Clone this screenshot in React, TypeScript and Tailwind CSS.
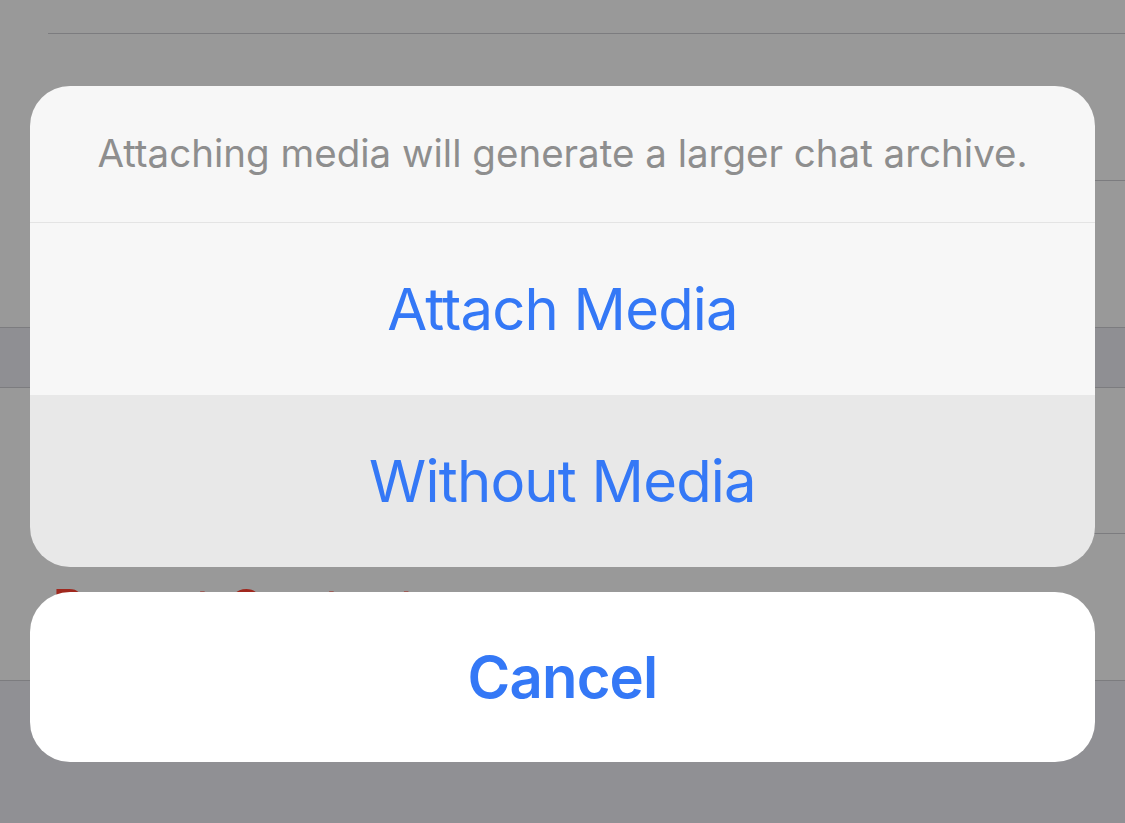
import React from 'react';

const font = { fontFamily: 'Inter, "Noto Sans", sans-serif' };

function ListRow({ text, tone, inset = true, h }: { text?: string; tone?: string; inset?: boolean; h: string }) {
  return (
    <div className={`${h} bg-[#999999] ${inset ? 'pl-[48px]' : ''}`}>
      <div className={`h-full border-b border-[#7c7c7f] flex items-center ${inset ? '' : 'pl-[48px]'}`}>
        {text && <span className={`text-[51px] leading-none pl-[4px] ${tone}`}>{text}</span>}
      </div>
    </div>
  );
}

export default function App() {
  return (
    <div className="relative w-[1125px] h-[823px] overflow-hidden bg-[#909094]" style={font}>
      {/* dimmed settings list behind the sheet */}
      <div className="flex flex-col">
        <ListRow h="h-[34px]" />
        <ListRow h="h-[147px]" text="Export Chat" tone="text-[#0a4c99]" />
        <ListRow h="h-[147px]" inset={false} />
        <div className="h-[60px] bg-[#8f8f93] border-b border-[#7c7c7f]" />
        <ListRow h="h-[146px]" />
        <ListRow h="h-[147px]" inset={false} text="Report Contact" tone="text-[#a0281e]" />
      </div>

      {/* action sheet */}
      <div className="absolute left-[30px] right-[30px] top-[86px] flex flex-col gap-[25px]">
        <div className="rounded-[40px] overflow-hidden flex flex-col">
          <div className="h-[137px] bg-[#f7f7f7] flex items-center justify-center border-b border-[#e4e4e4]">
            <span className="text-[38.5px] text-[#8e8e8e]">
              Attaching media will generate a larger chat archive.
            </span>
          </div>
          <div className="h-[172px] bg-[#f7f7f7] flex items-center justify-center">
            <span className="text-[58px] tracking-[-0.8px] text-[#3478f6] leading-none">Attach Media</span>
          </div>
          <div className="h-[172px] bg-[#e8e8e8] flex items-center justify-center">
            <span className="text-[58px] tracking-[-0.8px] text-[#3478f6] leading-none">Without Media</span>
          </div>
        </div>
        <div className="h-[170px] rounded-[40px] bg-white flex items-center justify-center">
          <span className="text-[58px] tracking-[-0.8px] font-semibold text-[#3478f6] leading-none">Cancel</span>
        </div>
      </div>
    </div>
  );
}
